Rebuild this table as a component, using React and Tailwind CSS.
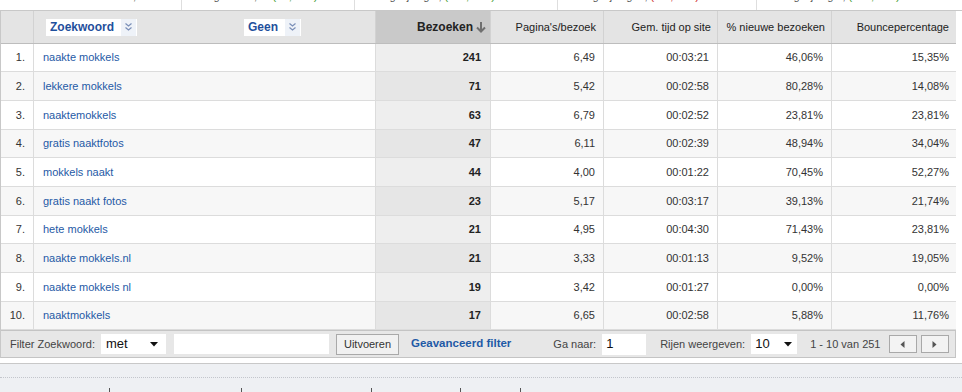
import React from "react";

const rows = [
  ["naakte mokkels", "241", "6,49", "00:03:21", "46,06%", "15,35%"],
  ["lekkere mokkels", "71", "5,42", "00:02:58", "80,28%", "14,08%"],
  ["naaktemokkels", "63", "6,79", "00:02:52", "23,81%", "23,81%"],
  ["gratis naaktfotos", "47", "6,11", "00:02:39", "48,94%", "34,04%"],
  ["mokkels naakt", "44", "4,00", "00:01:22", "70,45%", "52,27%"],
  ["gratis naakt fotos", "23", "5,17", "00:03:17", "39,13%", "21,74%"],
  ["hete mokkels", "21", "4,95", "00:04:30", "71,43%", "23,81%"],
  ["naakte mokkels.nl", "21", "3,33", "00:01:13", "9,52%", "19,05%"],
  ["naakte mokkels nl", "19", "3,42", "00:01:27", "0,00%", "0,00%"],
  ["naaktmokkels", "17", "6,65", "00:02:58", "5,88%", "11,76%"],
];

const rowHeights = ["h-[28px]", "h-[29px]", "h-[29px]", "h-[28px]", "h-[29px]", "h-[29px]", "h-[28px]", "h-[29px]", "h-[29px]", "h-[28px]"];

const cols = "grid grid-cols-[33px_342px_115px_113px_114px_114px_125px]";

const Chevron = () => (
  <span className="flex h-[17px] w-[15px] items-center justify-center bg-[#eef2f8]">
    <svg width="9" height="10" viewBox="0 0 9 10">
      <polyline points="1.5,1.5 4.5,4 7.5,1.5" fill="none" stroke="#7a8fb8" strokeWidth="1.2" />
      <polyline points="1.5,5.5 4.5,8 7.5,5.5" fill="none" stroke="#7a8fb8" strokeWidth="1.2" />
    </svg>
  </span>
);

const DimBox = ({ label, width }) => (
  <div className={`flex h-[17px] items-center justify-between bg-white pl-[4px] pr-[1px] ${width}`}>
    <span className="text-[12px] font-bold text-[#1f4f9c]">{label}</span>
    <Chevron />
  </div>
);

const Caret = () => (
  <svg width="8" height="5" viewBox="0 0 8 5">
    <polygon points="0,0 8,0 4,4.5" fill="#111" />
  </svg>
);

// summary line above the table, scrolled so only its descenders show
const Strip = ({ w, pl, text, delta, color }) => (
  <div className={`h-full overflow-hidden border-r border-[#dedede] last:border-r-0 ${w}`}>
    <div className={`-mt-[10px] whitespace-nowrap text-[11px] leading-[13px] text-[#555] ${pl}`}>
      {text}
      {delta && <span className={color}> {delta}</span>}
    </div>
  </div>
);

export default function App() {
  return (
    <div
      className="relative h-[392px] w-[962px] overflow-hidden bg-white text-[#333]"
      style={{ fontFamily: '"Liberation Sans", Arial, sans-serif' }}
    >
      <div className="flex h-[11px] border-b border-[#c8c8c8]">
        <Strip w="w-[182px]" pl="pl-[70px]" text="Totaal: 8.104, 1" />
        <Strip w="w-[173px]" pl="pl-[18px]" text="Pagina's: 5,16" delta="(+2,34%)" color="text-[#3a9a2a]" />
        <Strip w="w-[203px]" pl="pl-[18px]" text="Vergelijking 2," delta="(+11,42%)" color="text-[#3a9a2a]" />
        <Strip w="w-[199px]" pl="pl-[18px]" text="Vergelijking: 3," delta="(-12,04%)" color="text-[#cc2222]" />
        <Strip w="w-[205px]" pl="pl-[20px]" text="Vergelijking 4," delta="(+10,17%)" color="text-[#3a9a2a]" />
      </div>

      <div className="w-[956px] border-l border-[#c8c8c8]">
        {/* header */}
        <div className={`${cols} h-[33px] border-b border-[#bdbdbd] bg-[#e4e4e4] text-[11px]`}>
          <div className="border-r border-[#d2d2d2]" />
          <div className="flex items-center border-r border-[#d2d2d2] pl-[12px]">
            <DimBox label="Zoekwoord" width="w-[91px]" />
            <div className="w-[107px]" />
            <DimBox label="Geen" width="w-[57px]" />
          </div>
          <div className="flex items-center justify-end gap-[3px] border-r border-[#d2d2d2] bg-[#c9c9c9] pr-[4px] text-[12px] font-bold text-[#222]">
            Bezoeken
            <svg width="10" height="12" viewBox="0 0 10 12">
              <line x1="5" y1="1" x2="5" y2="10" stroke="#6f6f6f" strokeWidth="2" />
              <polyline points="1,6.5 5,10.5 9,6.5" fill="none" stroke="#6f6f6f" strokeWidth="2" />
            </svg>
          </div>
          <div className="flex items-center justify-end border-r border-[#d2d2d2] pr-[7px] text-[#222]">Pagina's/bezoek</div>
          <div className="flex items-center justify-end border-r border-[#d2d2d2] pr-[6px] text-[#222]">Gem. tijd op site</div>
          <div className="flex items-center justify-end border-r border-[#d2d2d2] pr-[6px] text-[#222]">% nieuwe bezoeken</div>
          <div className="flex items-center justify-end pr-[8px] text-[#222]">Bouncepercentage</div>
        </div>

        {/* rows */}
        {rows.map((r, i) => {
          const even = i % 2 === 1;
          return (
            <div
              key={i}
              className={`${cols} ${rowHeights[i]} border-b border-[#dcdcdc] text-[11px] ${even ? "bg-[#f7f7f7]" : "bg-white"}`}
            >
              <div className="flex items-center justify-end border-r border-[#dcdcdc] pr-[8px] text-[#333]">{i + 1}.</div>
              <div className="flex items-center border-r border-[#dcdcdc] pl-[9px] text-[#1f5aa6]">{r[0]}</div>
              <div className={`flex items-center justify-end border-r border-[#dcdcdc] pr-[9px] font-bold text-[#222] ${even ? "bg-[#e6e6e6]" : "bg-[#eeeeee]"}`}>
                {r[1]}
              </div>
              <div className="flex items-center justify-end border-r border-[#dcdcdc] pr-[8px]">{r[2]}</div>
              <div className="flex items-center justify-end border-r border-[#dcdcdc] pr-[8px]">{r[3]}</div>
              <div className="flex items-center justify-end border-r border-[#dcdcdc] pr-[8px]">{r[4]}</div>
              <div className="flex items-center justify-end pr-[8px]">{r[5]}</div>
            </div>
          );
        })}

        {/* footer */}
        <div className="flex h-[28px] items-center border-b border-t border-r border-[#c4c4c4] bg-[#e7e7e7] text-[11px] text-[#444]">
          <span className="ml-[9px]">Filter Zoekwoord:</span>
          <div className="ml-[6px] flex h-[20px] w-[65px] items-center justify-between bg-white pl-[5px] pr-[8px] text-[13px] text-[#111]">
            met
            <Caret />
          </div>
          <div className="ml-[8px] h-[20px] w-[155px] bg-white" />
          <button className="ml-[7px] h-[21px] w-[63px] border border-[#a9a9a9] bg-[#f1f1f1] text-[11px] text-[#333]">Uitvoeren</button>
          <span className="ml-[12px] text-[11.5px] font-bold text-[#1f5aa6]">Geavanceerd filter</span>
          <span className="ml-[42px]">Ga naar:</span>
          <div className="ml-[6px] flex h-[21px] w-[44px] items-center bg-white pl-[4px] text-[13px] text-[#111]">1</div>
          <span className="ml-[14px]">Rijen weergeven:</span>
          <div className="ml-[6px] flex h-[20px] w-[46px] items-center justify-between bg-white pl-[4px] pr-[5px] text-[13px] text-[#111]">
            10
            <Caret />
          </div>
          <span className="ml-[13px]">1 - 10 van 251</span>
          <button className="ml-[8px] flex h-[18px] w-[28px] items-center justify-center border border-[#a9a9a9] bg-[#f3f3f3]">
            <svg width="5" height="7" viewBox="0 0 5 7">
              <polygon points="4.5,0 4.5,7 0.5,3.5" fill="#555" />
            </svg>
          </button>
          <button className="ml-[4px] flex h-[18px] w-[28px] items-center justify-center border border-[#a9a9a9] bg-[#f3f3f3]">
            <svg width="5" height="7" viewBox="0 0 5 7">
              <polygon points="0.5,0 0.5,7 4.5,3.5" fill="#555" />
            </svg>
          </button>
        </div>
      </div>

      {/* page below */}
      <div className="mt-[5px] h-[40px] border-t border-[#c8c8c8] bg-[#eef0f3]">
        <div className="mt-[13px] border-t border-dotted border-[#c3c6cc]" />
        <div className="relative mt-[10px] h-[6px]">
          {[109, 241, 371, 460, 520].map((x) => (
            <div key={x} className="absolute top-0 h-[6px] w-px bg-[#555]" style={{ left: x }} />
          ))}
        </div>
      </div>
    </div>
  );
}
